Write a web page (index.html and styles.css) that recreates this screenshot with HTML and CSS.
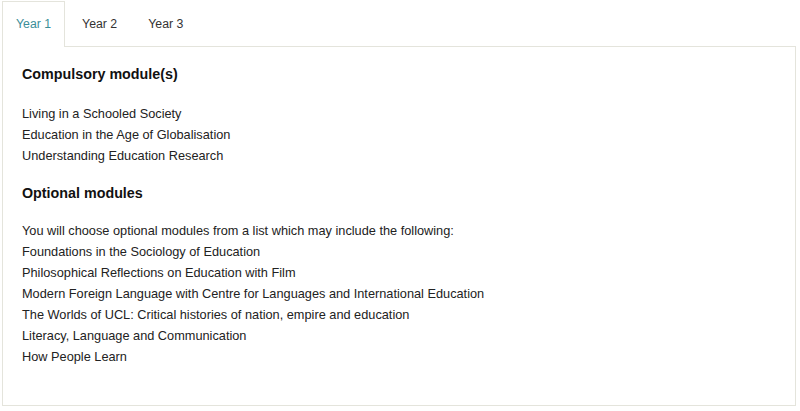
FILE: index.html
```html
<!DOCTYPE html>
<html lang="en">
<head>
<meta charset="utf-8">
<title>Modules</title>
<link rel="stylesheet" href="styles.css">
</head>
<body>
<div class="tabs">
  <ul class="tab-list">
    <li class="tab active">Year 1</li>
    <li class="tab">Year 2</li>
    <li class="tab">Year 3</li>
  </ul>
  <div class="panel">
    <h3 class="heading">Compulsory module(s)</h3>
    <ul class="modules">
      <li>Living in a Schooled Society</li>
      <li>Education in the Age of Globalisation</li>
      <li>Understanding Education Research</li>
    </ul>
    <h3 class="heading">Optional modules</h3>
    <ul class="modules modules-optional">
      <li>You will choose optional modules from a list which may include the following:</li>
      <li>Foundations in the Sociology of Education</li>
      <li>Philosophical Reflections on Education with Film</li>
      <li>Modern Foreign Language with Centre for Languages and International Education</li>
      <li>The Worlds of UCL: Critical histories of nation, empire and education</li>
      <li>Literacy, Language and Communication</li>
      <li>How People Learn</li>
    </ul>
  </div>
</div>
</body>
</html>
```
FILE: styles.css
```css
html, body {
  margin: 0;
  padding: 0;
  background: #ffffff;
}
body {
  font-family: "Liberation Sans", Arial, sans-serif;
  color: #222222;
}
.tabs {
  margin: 1px 4px 0 2px;
}
.tab-list {
  list-style: none;
  margin: 0;
  padding: 0;
  display: flex;
  gap: 3px;
  position: relative;
  z-index: 1;
}
.tab {
  font-size: 12.3px;
  line-height: 14px;
  padding: 15px 13px 15px 13px;
  border: 1px solid transparent;
  border-bottom: none;
  color: #333333;
}
.tab.active {
  color: #3b8e98;
  border-color: #e4e4dc;
  background: #ffffff;
  margin-bottom: -1px;
  padding-bottom: 16px;
}
.panel {
  border: 1px solid #e4e4dc;
  height: 341px;
  padding: 17px 19px 0 19px;
  box-sizing: content-box;
}
.heading {
  font-size: 14.3px;
  line-height: 21px;
  font-weight: bold;
  margin: 0;
  color: #111111;
}
.modules {
  list-style: none;
  margin: 18px 0 17px 0;
  padding: 0;
  font-size: 12.75px;
  line-height: 21px;
}
.modules-optional {
  margin-top: 16px;
}
```
